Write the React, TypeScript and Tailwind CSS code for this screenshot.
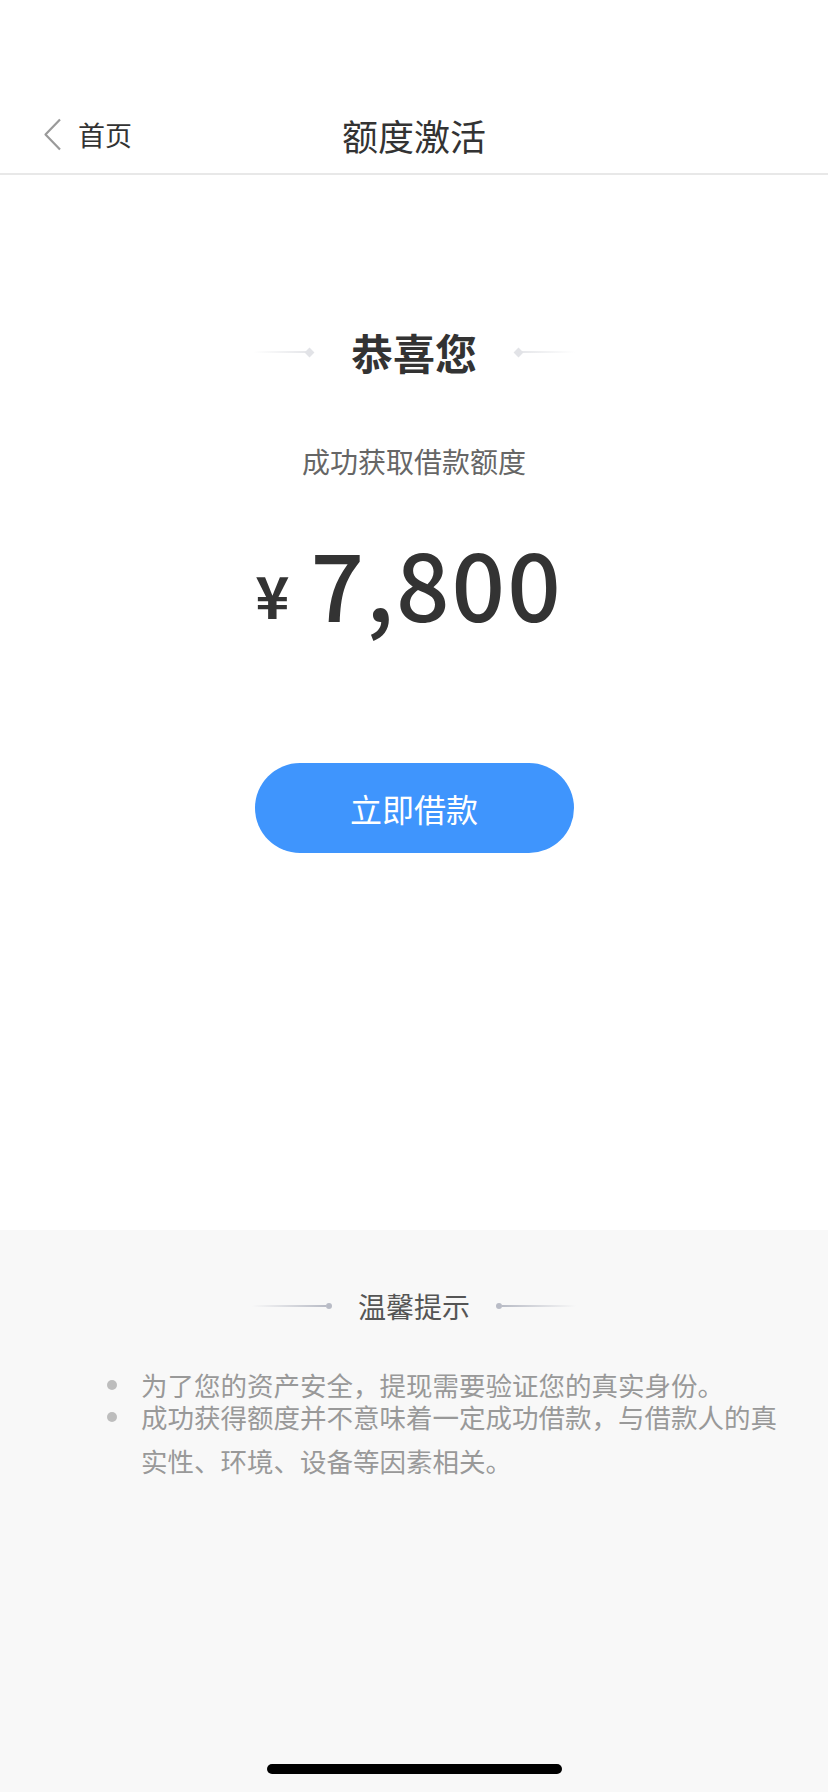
import React from 'react';

const font = { fontFamily: '"Noto Sans CJK SC", "Noto Sans", sans-serif' };

const TitleDeco: React.FC<{ side: 'left' | 'right' }> = ({ side }) => (
  <div className={`flex items-center w-[60px] ${side === 'right' ? 'flex-row-reverse' : ''}`}>
    <div
      className={`h-[2px] flex-1 ${
        side === 'left' ? 'bg-gradient-to-r' : 'bg-gradient-to-l'
      } from-transparent to-[#e6e7ea]`}
    />
    <div className="w-[7px] h-[7px] rotate-45 bg-[#e2e3e7] shrink-0" />
  </div>
);

const TipDeco: React.FC<{ side: 'left' | 'right' }> = ({ side }) => (
  <div className={`flex items-center w-[80px] ${side === 'right' ? 'flex-row-reverse' : ''}`}>
    <div
      className={`h-[2px] flex-1 ${
        side === 'left' ? 'bg-gradient-to-r' : 'bg-gradient-to-l'
      } from-transparent to-[#b9bcc6]`}
    />
    <div className="w-[6px] h-[6px] rounded-full bg-[#b9bcc6] shrink-0" />
  </div>
);

export default function App() {
  return (
    <div className="w-[828px] h-[1792px] flex flex-col bg-white text-[#333]" style={font}>
      {/* status bar space */}
      <div className="h-[96px] shrink-0" />

      {/* nav */}
      <div className="relative h-[79px] shrink-0 flex items-center border-b-2 border-[#e8e8e8]">
        <div className="flex items-center pl-[43px]">
          <svg width="19" height="33" viewBox="0 0 19 33" fill="none">
            <path d="M17 1.5 L2.5 16.5 L17 31.5" stroke="#9a9a9a" strokeWidth="2.2" strokeLinejoin="round" />
          </svg>
          <span className="ml-[16px] text-[27px] leading-none text-[#333]">首页</span>
        </div>
        <div className="absolute inset-0 flex items-center justify-center pointer-events-none">
          <span className="text-[36px] leading-none text-[#333]">额度激活</span>
        </div>
      </div>

      {/* main */}
      <div className="flex flex-col items-center flex-1">
        <div className="mt-[156px] flex items-center gap-[38px]">
          <TitleDeco side="left" />
          <span className="text-[42px] font-bold leading-none text-[#333]">恭喜您</span>
          <TitleDeco side="right" />
        </div>

        <div className="mt-[74px] text-[28px] leading-none text-[#666]">成功获取借款额度</div>

        <div className="mt-[59px] pr-[10px] flex items-baseline gap-[21px] text-[#333]">
          <span className="text-[58px] font-semibold leading-none -translate-y-[3px]">¥</span>
          <span className="text-[94px] leading-none font-medium tracking-[2px]">7,800</span>
        </div>

        <button className="mt-[135px] w-[319px] h-[90px] rounded-full bg-[#3f95fd] text-white text-[32px] leading-none">
          立即借款
        </button>
      </div>

      {/* tips */}
      <div className="h-[562px] shrink-0 bg-[#f8f8f8] flex flex-col">
        <div className="mt-[62px] flex items-center justify-center gap-[26px]">
          <TipDeco side="left" />
          <span className="text-[28px] leading-none text-[#555]">温馨提示</span>
          <TipDeco side="right" />
        </div>

        <ul className="mt-[55px] pl-[107px]">
          <li className="flex">
            <span className="w-[10px] h-[10px] rounded-full bg-[#bdbdbd] mt-[5px] shrink-0" />
            <span className="ml-[24px] w-[650px] text-[26.5px] leading-[20px] text-[#999]">
              为了您的资产安全，提现需要验证您的真实身份。
            </span>
          </li>
          <li className="flex">
            <span className="w-[10px] h-[10px] rounded-full bg-[#bdbdbd] mt-[17px] shrink-0" />
            <span className="ml-[24px] w-[650px] text-[26.5px] leading-[44px] text-[#999]">
              成功获得额度并不意味着一定成功借款，与借款人的真实性、环境、设备等因素相关。
            </span>
          </li>
        </ul>

        <div className="flex-1" />
        <div className="flex justify-center pb-[18px]">
          <div className="w-[295px] h-[10px] rounded-full bg-black" />
        </div>
      </div>
    </div>
  );
}
